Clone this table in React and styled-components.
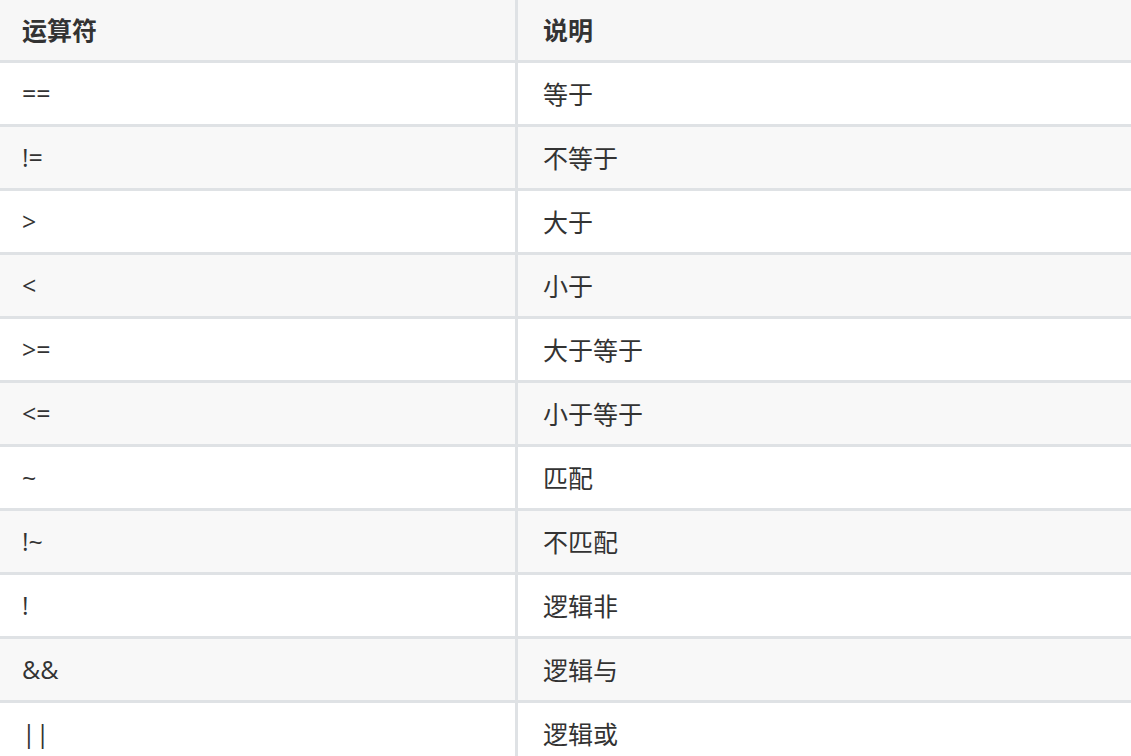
import React from "react";
import styled, { createGlobalStyle } from "styled-components";

const rows = [
  ["==", "等于"],
  ["!=", "不等于"],
  [">", "大于"],
  ["<", "小于"],
  [">=", "大于等于"],
  ["<=", "小于等于"],
  ["~", "匹配"],
  ["!~", "不匹配"],
  ["!", "逻辑非"],
  ["&&", "逻辑与"],
  ["||", "逻辑或"],
];

const GlobalStyle = createGlobalStyle`
  html, body {
    margin: 0;
    padding: 0;
    background: #ffffff;
    overflow: hidden;
  }
  body {
    font-family: "Open Sans", "Noto Sans CJK SC", sans-serif;
    color: #333333;
  }
`;

const App = () => {
  return (
    <>
      <GlobalStyle />
      <Table>
        <Row>
          <Cell $head $first>运算符</Cell>
          <Cell $head>说明</Cell>
        </Row>
        {rows.map((r, i) => (
          <Row key={i}>
            <Cell $alt={i % 2 === 1} $first>{r[0]}</Cell>
            <Cell $alt={i % 2 === 1}>{r[1]}</Cell>
          </Row>
        ))}
      </Table>
    </>
  );
};

export default App;

const Table = styled.div`
  display: flex;
  flex-direction: column;
  width: 1131px;
`;

const Row = styled.div`
  display: grid;
  grid-template-columns: 515px 1fr;
  column-gap: 3px;
  background: #dfe2e5;
  border-bottom: 3px solid #dfe2e5;
`;

const Cell = styled.div`
  display: flex;
  align-items: center;
  box-sizing: border-box;
  height: ${(p) => (p.$head ? "60px" : "61px")};
  padding-left: ${(p) => (p.$first ? "22px" : "25px")};
  padding-bottom: 2px;
  background: ${(p) => (p.$head ? "#f7f7f7" : p.$alt ? "#f8f8f8" : "#ffffff")};
  font-size: 25px;
  font-weight: ${(p) => (p.$head ? 700 : 400)};
  white-space: pre;
`;
